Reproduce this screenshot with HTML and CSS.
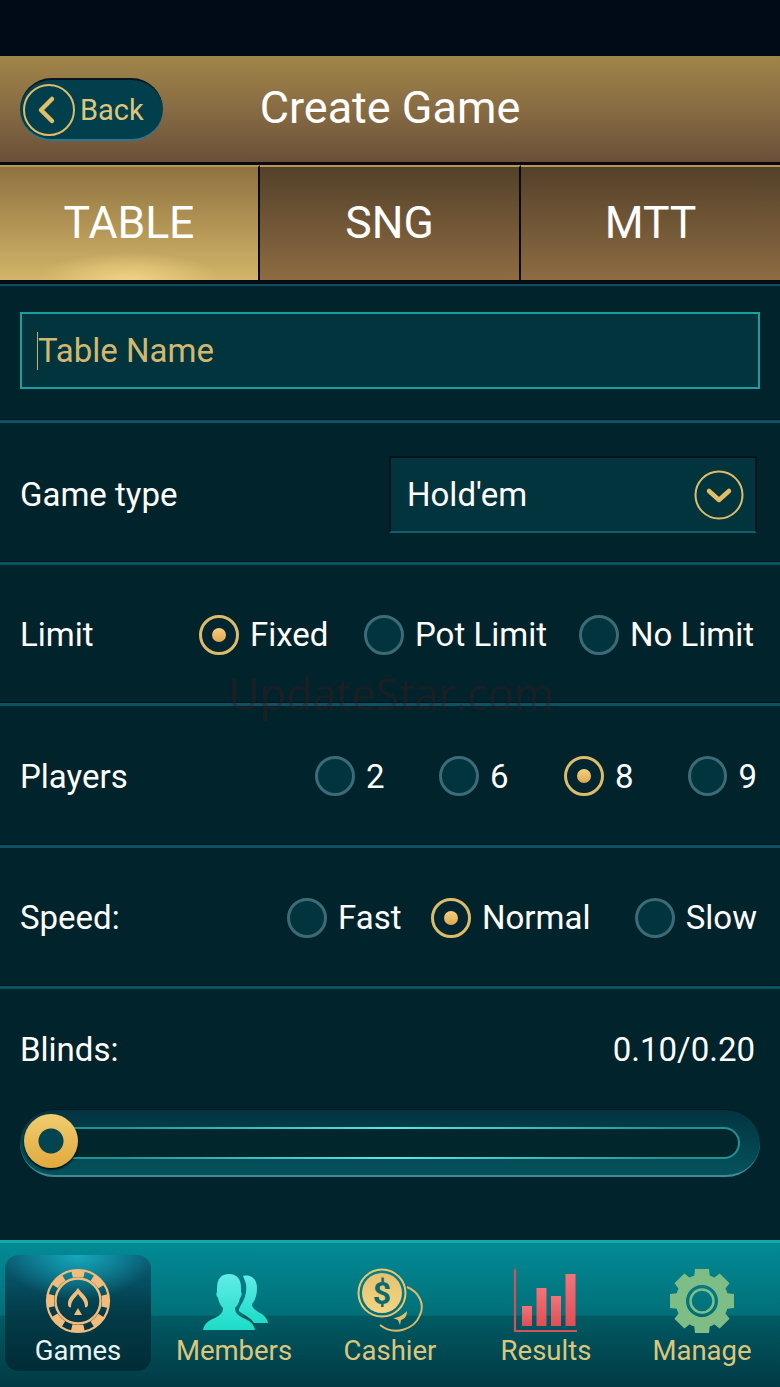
FILE: index.html
```html
<!DOCTYPE html>
<html>
	<head>
		<title>Create Game</title>
		<link rel="stylesheet" href="styles.css">
	</head>
	<body>
		<div class="screen">
			<div class="statusBar"></div>
			<div class="topBar">
				<div class="backButton">
					<svg class="backIcon" viewBox="0 0 52 52">
						<circle cx="26" cy="26" r="25" fill="none" stroke="#dcbc68" stroke-width="2"/>
						<path d="M29 15 L18 26 L29 37" fill="none" stroke="#e2be66" stroke-width="4.5" stroke-linecap="round" stroke-linejoin="round"/>
					</svg>
					<span>Back</span>
				</div>
				<div class="title">Create Game</div>
			</div>
			<div class="tabs">
				<div class="tab active">TABLE</div>
				<div class="tab">SNG</div>
				<div class="tab">MTT</div>
			</div>
			<div class="form">
				<div class="nameRow">
					<div class="nameBox"><span class="caret"></span>Table Name</div>
				</div>
				<div class="row selectRow">
					<div class="label">Game type</div>
					<div class="select">
						<span>Hold'em</span>
						<svg class="selectIcon" viewBox="0 0 50 50">
							<circle cx="25" cy="25" r="23.5" fill="none" stroke="#dcbc68" stroke-width="2"/>
							<path d="M15 21 L25 30 L35 21" fill="none" stroke="#e2be66" stroke-width="4.5" stroke-linecap="round" stroke-linejoin="round"/>
						</svg>
					</div>
				</div>
				<div class="row">
					<div class="label">Limit</div>
					<div class="options limitOptions">
						<div class="option"><span class="radio on"></span>Fixed</div>
						<div class="option"><span class="radio"></span>Pot Limit</div>
						<div class="option"><span class="radio"></span>No Limit</div>
					</div>
				</div>
				<div class="row">
					<div class="label">Players</div>
					<div class="options playerOptions">
						<div class="option"><span class="radio"></span>2</div>
						<div class="option"><span class="radio"></span>6</div>
						<div class="option"><span class="radio on"></span>8</div>
						<div class="option"><span class="radio"></span>9</div>
					</div>
				</div>
				<div class="row">
					<div class="label">Speed:</div>
					<div class="options speedOptions">
						<div class="option"><span class="radio"></span>Fast</div>
						<div class="option"><span class="radio on"></span>Normal</div>
						<div class="option"><span class="radio"></span>Slow</div>
					</div>
				</div>
				<div class="blinds">
					<div class="blindsHead">
						<div class="label">Blinds:</div>
						<div class="label">0.10/0.20</div>
					</div>
					<div class="slider">
						<div class="sliderInner"></div>
						<div class="thumb"></div>
					</div>
				</div>
				<div class="watermark">UpdateStar.com</div>
			</div>
			<div class="nav">
				<div class="navItem active">
					<svg class="navIcon" viewBox="0 0 66 66">
						<circle cx="33" cy="33" r="31" fill="none" stroke="#f2bd7c" stroke-width="2.2"/>
						<circle cx="33" cy="33" r="27.5" fill="none" stroke="#f2bd7c" stroke-width="7" stroke-dasharray="12.5 9.1" stroke-dashoffset="6.25" transform="rotate(-90 33 33)"/>
						<circle cx="33" cy="33" r="22.5" fill="none" stroke="#f2bd7c" stroke-width="2.4"/>
						<path d="M33 20 C36 25 44 29 43 37 C42.5 39 41 40 40 39 C40 33 36 30 33 26 C30 30 26 33 26 39 C25 40 23.5 39 23 37 C22 29 30 25 33 20 Z" fill="#f2bd7c"/>
						<path d="M33 40 L37 47 L29 47 Z" fill="#f2bd7c"/>
					</svg>
					<span>Games</span>
				</div>
				<div class="navItem">
					<svg class="navIcon" viewBox="0 0 66 66">
						<defs>
							<linearGradient id="memberFill" x1="0" y1="0" x2="0" y2="1">
								<stop offset="0" stop-color="#62ece6"/>
								<stop offset="1" stop-color="#1cdcc8"/>
							</linearGradient>
						</defs>
						<path d="M42 8 C50 6 56 11 56 20 C56 27 54 33 51 36 C51 40 54 42 59 45 C63 47 66 50 67 55 L53 55 C51 51 44 47 39 44 C37 43 38 40 40 37 C44 31 46 24 45 16 C44 13 43 10 42 8 Z" fill="url(#memberFill)"/>
						<path d="M28 6 C36 6 40 11 40 20 L40 24 C41 25 41 28 39 30 C38 35 36 38 34 40 C34 44 36 47 42 50 C48 52 53 56 54 62 L2 62 C3 56 8 52 14 50 C20 47 22 44 22 40 C20 38 18 35 17 30 C15 28 15 25 16 24 L16 20 C16 11 20 6 28 6 Z" fill="url(#memberFill)"/>
					</svg>
					<span>Members</span>
				</div>
				<div class="navItem">
					<svg class="navIcon" viewBox="0 0 66 66">
						<defs>
							<linearGradient id="coinFill" x1="0" y1="0" x2="0" y2="1">
								<stop offset="0" stop-color="#e6c270"/>
								<stop offset="1" stop-color="#f3d584"/>
							</linearGradient>
						</defs>
						<path d="M50 19 C62 24 68 36 63 47 C57 62 37 68 23 57" fill="none" stroke="#dcbc68" stroke-width="2"/>
						<circle cx="25" cy="25" r="23.5" fill="none" stroke="#e9c56e" stroke-width="2"/>
						<circle cx="25" cy="25" r="20" fill="url(#coinFill)"/>
						<text class="dollar" x="25" y="36" text-anchor="middle">$</text>
						<path d="M50 43 C50 49 47 51 44 52 L43 57 L41 52 L36 50 C40 50 45 48 50 43 Z" fill="#e2be66"/>
					</svg>
					<span>Cashier</span>
				</div>
				<div class="navItem">
					<svg class="navIcon" viewBox="0 0 66 66">
						<defs>
							<linearGradient id="barFill" x1="0" y1="0" x2="0" y2="1">
								<stop offset="0" stop-color="#f5727a"/>
								<stop offset="1" stop-color="#e04e54"/>
							</linearGradient>
						</defs>
						<path d="M2 1 L2 63 L64 63" fill="none" stroke="#d3525a" stroke-width="2.2"/>
						<rect x="9" y="38" width="10" height="20" fill="url(#barFill)"/>
						<rect x="23.5" y="20" width="10" height="38" fill="url(#barFill)"/>
						<rect x="38" y="28" width="10" height="30" fill="url(#barFill)"/>
						<rect x="52.5" y="6" width="10" height="52" fill="url(#barFill)"/>
					</svg>
					<span>Results</span>
				</div>
				<div class="navItem">
					<svg class="navIcon" viewBox="0 0 66 66">
						<circle cx="33" cy="33" r="20.5" fill="none" stroke="#7fbd86" stroke-width="9"/>
						<circle cx="33" cy="33" r="25" fill="none" stroke="#7fbd86" stroke-width="3"/>
						<g fill="#7fbd86">
							<path d="M26 1 L40 1 L41 10 L25 10 Z"/>
							<path d="M26 1 L40 1 L41 10 L25 10 Z" transform="rotate(45 33 33)"/>
							<path d="M26 1 L40 1 L41 10 L25 10 Z" transform="rotate(90 33 33)"/>
							<path d="M26 1 L40 1 L41 10 L25 10 Z" transform="rotate(135 33 33)"/>
							<path d="M26 1 L40 1 L41 10 L25 10 Z" transform="rotate(180 33 33)"/>
							<path d="M26 1 L40 1 L41 10 L25 10 Z" transform="rotate(225 33 33)"/>
							<path d="M26 1 L40 1 L41 10 L25 10 Z" transform="rotate(270 33 33)"/>
							<path d="M26 1 L40 1 L41 10 L25 10 Z" transform="rotate(315 33 33)"/>
						</g>
						<circle cx="33" cy="33" r="11.5" fill="none" stroke="#7fbd86" stroke-width="2.5"/>
					</svg>
					<span>Manage</span>
				</div>
			</div>
		</div>
	</body>
</html>
```
FILE: styles.css
```css
body
{
	margin: 0;
	background-color: #01232c;
	font-family: Roboto, "Liberation Sans", sans-serif;
}
.screen
{
	width: 780px;
	height: 1387px;
	display: flex;
	flex-direction: column;
	overflow: hidden;
}
.statusBar
{
	height: 56px;
	background-color: #000b18;
}
.topBar
{
	height: 106px;
	display: flex;
	align-items: center;
	justify-content: center;
	position: relative;
	background: linear-gradient(#a08548, #8a6e44 45%, #6b503a);
}
.title
{
	color: #ffffff;
	font-size: 45px;
	margin-top: -4px;
}
.backButton
{
	position: absolute;
	left: 20px;
	top: 22px;
	width: 143px;
	height: 63px;
	box-sizing: border-box;
	display: flex;
	align-items: center;
	gap: 5px;
	padding-left: 3px;
	background-color: #023f4c;
	border-top: 2px solid #0a1420;
	border-bottom: 2px solid #2c7890;
	border-radius: 32px;
	color: #dcc67c;
	font-size: 29px;
}
.backIcon
{
	width: 52px;
	height: 52px;
}
.tabs
{
	display: grid;
	grid-template-columns: 260px 261px 259px;
	height: 122px;
	box-sizing: border-box;
	padding-top: 3px;
	background-color: #0a0a14;
	padding-bottom: 4px;
}
.tab
{
	display: flex;
	align-items: center;
	justify-content: center;
	padding-bottom: 2px;
	color: #ffffff;
	font-size: 44.5px;
	border-top: 2px solid #b8974e;
	border-right: 2px solid #0a0a14;
	background: linear-gradient(#54412a, #8d6c42);
}
.tab:last-child
{
	border-right: 0;
}
.tab.active
{
	background: radial-gradient(ellipse 90px 28px at 50% 100%, #efd383, rgba(239, 211, 131, 0)), linear-gradient(#8f7240, #d2b568);
}
.form
{
	flex: 1;
	position: relative;
	background-color: #01232c;
}
.nameRow
{
	height: 139px;
	box-sizing: border-box;
	padding: 26px 20px 0 20px;
	border-top: 2px solid #0a5160;
	border-bottom: 3px solid #0b5262;
	box-shadow: inset 0 -1px 0 #00131c;
}
.nameBox
{
	height: 77px;
	box-sizing: border-box;
	display: flex;
	align-items: center;
	padding-left: 15px;
	background-color: #02343e;
	border: 2px solid #1b9ea2;
	color: #d2b86f;
	font-size: 33px;
}
.caret
{
	width: 1px;
	height: 38px;
	background-color: #c9ae68;
}
.row
{
	height: 141.5px;
	box-sizing: border-box;
	display: flex;
	align-items: center;
	justify-content: space-between;
	padding: 2px 23px 0 20px;
	border-bottom: 3px solid #0b5262;
	box-shadow: inset 0 -1px 0 #00131c;
}
.selectRow
{
	padding-top: 5px;
}
.label
{
	color: #ffffff;
	font-size: 33px;
}
.select
{
	width: 368px;
	height: 77px;
	box-sizing: border-box;
	display: flex;
	align-items: center;
	justify-content: space-between;
	padding: 0 11px 0 16px;
	background-color: #02343e;
	border: 2px solid #011320;
	border-bottom-color: #0e5e6c;
	color: #ffffff;
	font-size: 33px;
}
.selectIcon
{
	width: 50px;
	height: 50px;
}
.options
{
	display: grid;
}
.limitOptions
{
	grid-template-columns: 165px 215px 178px;
}
.playerOptions
{
	grid-template-columns: 124px 125px 124px 69px;
}
.speedOptions
{
	grid-template-columns: 144px 204px 122px;
}
.option
{
	display: flex;
	align-items: center;
	gap: 11px;
	color: #ffffff;
	font-size: 33px;
	white-space: nowrap;
}
.radio
{
	width: 40px;
	height: 40px;
	box-sizing: border-box;
	display: flex;
	align-items: center;
	justify-content: center;
	background-color: #02343e;
	border: 3px solid #3c6b78;
	border-radius: 50%;
}
.radio.on
{
	background-color: #022530;
	border-color: #dcbc68;
}
.radio.on::before
{
	content: "";
	width: 14px;
	height: 14px;
	border-radius: 50%;
	background: linear-gradient(#f3d080, #e0a850);
}
.blinds
{
	padding: 0 20px;
}
.blindsHead
{
	display: flex;
	justify-content: space-between;
	padding: 41px 5px 0 0;
}
.slider
{
	position: relative;
	height: 68px;
	box-sizing: border-box;
	margin-top: 40px;
	padding: 17px 20px 0 28px;
	background: linear-gradient(#023440, #05525c);
	border-top: 1px solid #011824;
	border-bottom: 2px solid #3f8a94;
	border-radius: 34px;
}
.sliderInner
{
	position: relative;
	height: 32px;
	box-sizing: border-box;
	background-color: #01272c;
	border: 2px solid #1f9496;
	border-left: 0;
	border-radius: 0 16px 16px 0;
}
/* brighter middle of the two track lines */
.sliderInner::before
{
	content: "";
	position: absolute;
	left: 0;
	right: 0;
	top: -2px;
	bottom: -2px;
	background: linear-gradient(90deg, transparent 10%, #5ce8e2 50%, transparent 90%) top / 100% 2px no-repeat, linear-gradient(90deg, transparent 10%, #5ce8e2 50%, transparent 90%) bottom / 100% 2px no-repeat;
}
.thumb
{
	position: absolute;
	left: 4px;
	top: 4px;
	width: 54px;
	height: 54px;
	border-radius: 50%;
	background: radial-gradient(circle, #024450 12px, transparent 13px), linear-gradient(#f0cc70, #e2a93c);
	box-shadow: 0 2px 2px #00111a;
}
.watermark
{
	position: absolute;
	left: 228px;
	top: 380px;
	color: rgba(70, 25, 25, 0.4);
	font-family: "Open Sans", sans-serif;
	font-size: 43px;
}
.nav
{
	height: 147px;
	box-sizing: border-box;
	display: grid;
	grid-template-columns: repeat(5, 156px);
	border-top: 3px solid #16a8a8;
	background: linear-gradient(#028b96, #016f78 50%, #015a63 51%, #013a44);
}
.navItem
{
	margin: 12px 5px 16px 5px;
	display: flex;
	flex-direction: column;
	align-items: center;
	padding-top: 13px;
	color: #dcc67c;
	font-size: 27.5px;
	border-radius: 14px;
}
.navItem.active
{
	color: #e6f4f6;
	background: radial-gradient(ellipse 75px 45px at 50% 0, #15a8bc, rgba(21, 168, 188, 0)), linear-gradient(#0a5f78, #023c48 50%, #012c36);
}
.navIcon
{
	width: 66px;
	height: 66px;
	overflow: visible;
}
.dollar
{
	fill: #0a6a70;
	font-size: 32px;
	font-weight: 700;
}
```
